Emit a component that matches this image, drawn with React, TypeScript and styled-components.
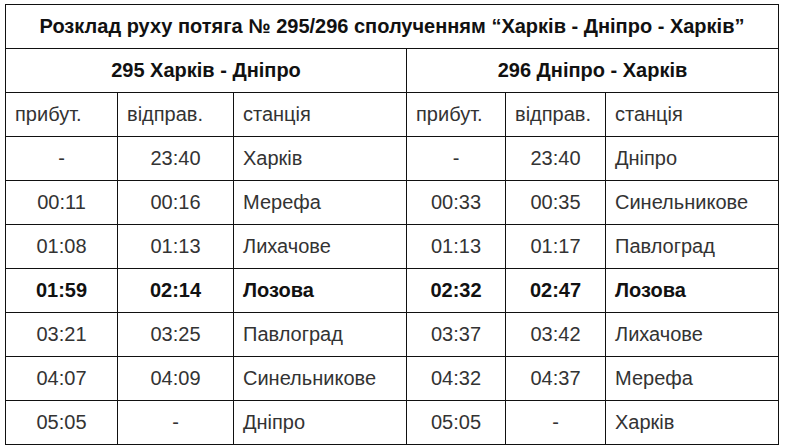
import React from 'react'
import styled, { createGlobalStyle } from 'styled-components'

type Stop = { arr: string; dep: string; station: string; main?: boolean }

const forward: Stop[] = [
  { arr: '-', dep: '23:40', station: 'Харків' },
  { arr: '00:11', dep: '00:16', station: 'Мерефа' },
  { arr: '01:08', dep: '01:13', station: 'Лихачове' },
  { arr: '01:59', dep: '02:14', station: 'Лозова', main: true },
  { arr: '03:21', dep: '03:25', station: 'Павлоград' },
  { arr: '04:07', dep: '04:09', station: 'Синельникове' },
  { arr: '05:05', dep: '-', station: 'Дніпро' },
]

const back: Stop[] = [
  { arr: '-', dep: '23:40', station: 'Дніпро' },
  { arr: '00:33', dep: '00:35', station: 'Синельникове' },
  { arr: '01:13', dep: '01:17', station: 'Павлоград' },
  { arr: '02:32', dep: '02:47', station: 'Лозова', main: true },
  { arr: '03:37', dep: '03:42', station: 'Лихачове' },
  { arr: '04:32', dep: '04:37', station: 'Мерефа' },
  { arr: '05:05', dep: '-', station: 'Харків' },
]

const widths = [112, 116, 173, 99, 100, 173]

const GlobalStyle = createGlobalStyle`
  body {
    margin: 0;
    background: #fff;
    font-family: "Liberation Sans", Arial, sans-serif;
  }
`

const Page = styled.div`
  padding: 4px 0 0 5px;
`

const Table = styled.table`
  border-collapse: collapse;
  table-layout: fixed;
  width: 774px;
  font-size: 20px;
  color: #333;
`

const Cell = styled.td<{ $align?: 'left' | 'center'; $bold?: boolean }>`
  border: 1px solid #111;
  height: 43px;
  padding: 0 9px;
  text-align: ${p => p.$align || 'left'};
  font-weight: ${p => (p.$bold ? 700 : 400)};
  color: ${p => (p.$bold ? '#111' : '#333')};
  white-space: nowrap;
`

const TitleCell = styled(Cell)`
  text-align: center;
  font-weight: 700;
  color: #111;
`

const App: React.FC = () => {
  return (
    <>
      <GlobalStyle />
      <Page>
        <Table>
          <colgroup>
            {widths.map((w, i) => (
              <col key={i} style={{ width: w }} />
            ))}
          </colgroup>
          <tbody>
            <tr>
              <TitleCell colSpan={6}>
                Розклад руху потяга № 295/296 сполученням “Харків - Дніпро - Харків”
              </TitleCell>
            </tr>
            <tr>
              <TitleCell colSpan={3}>295 Харків - Дніпро</TitleCell>
              <TitleCell colSpan={3}>296 Дніпро - Харків</TitleCell>
            </tr>
            <tr>
              <Cell>прибут.</Cell>
              <Cell>відправ.</Cell>
              <Cell>станція</Cell>
              <Cell>прибут.</Cell>
              <Cell>відправ.</Cell>
              <Cell>станція</Cell>
            </tr>
            {forward.map((f, i) => {
              const b = back[i]
              return (
                <tr key={i}>
                  <Cell $align="center" $bold={f.main}>{f.arr}</Cell>
                  <Cell $align="center" $bold={f.main}>{f.dep}</Cell>
                  <Cell $bold={f.main}>{f.station}</Cell>
                  <Cell $align="center" $bold={b.main}>{b.arr}</Cell>
                  <Cell $align="center" $bold={b.main}>{b.dep}</Cell>
                  <Cell $bold={b.main}>{b.station}</Cell>
                </tr>
              )
            })}
          </tbody>
        </Table>
      </Page>
    </>
  )
}

export default App
